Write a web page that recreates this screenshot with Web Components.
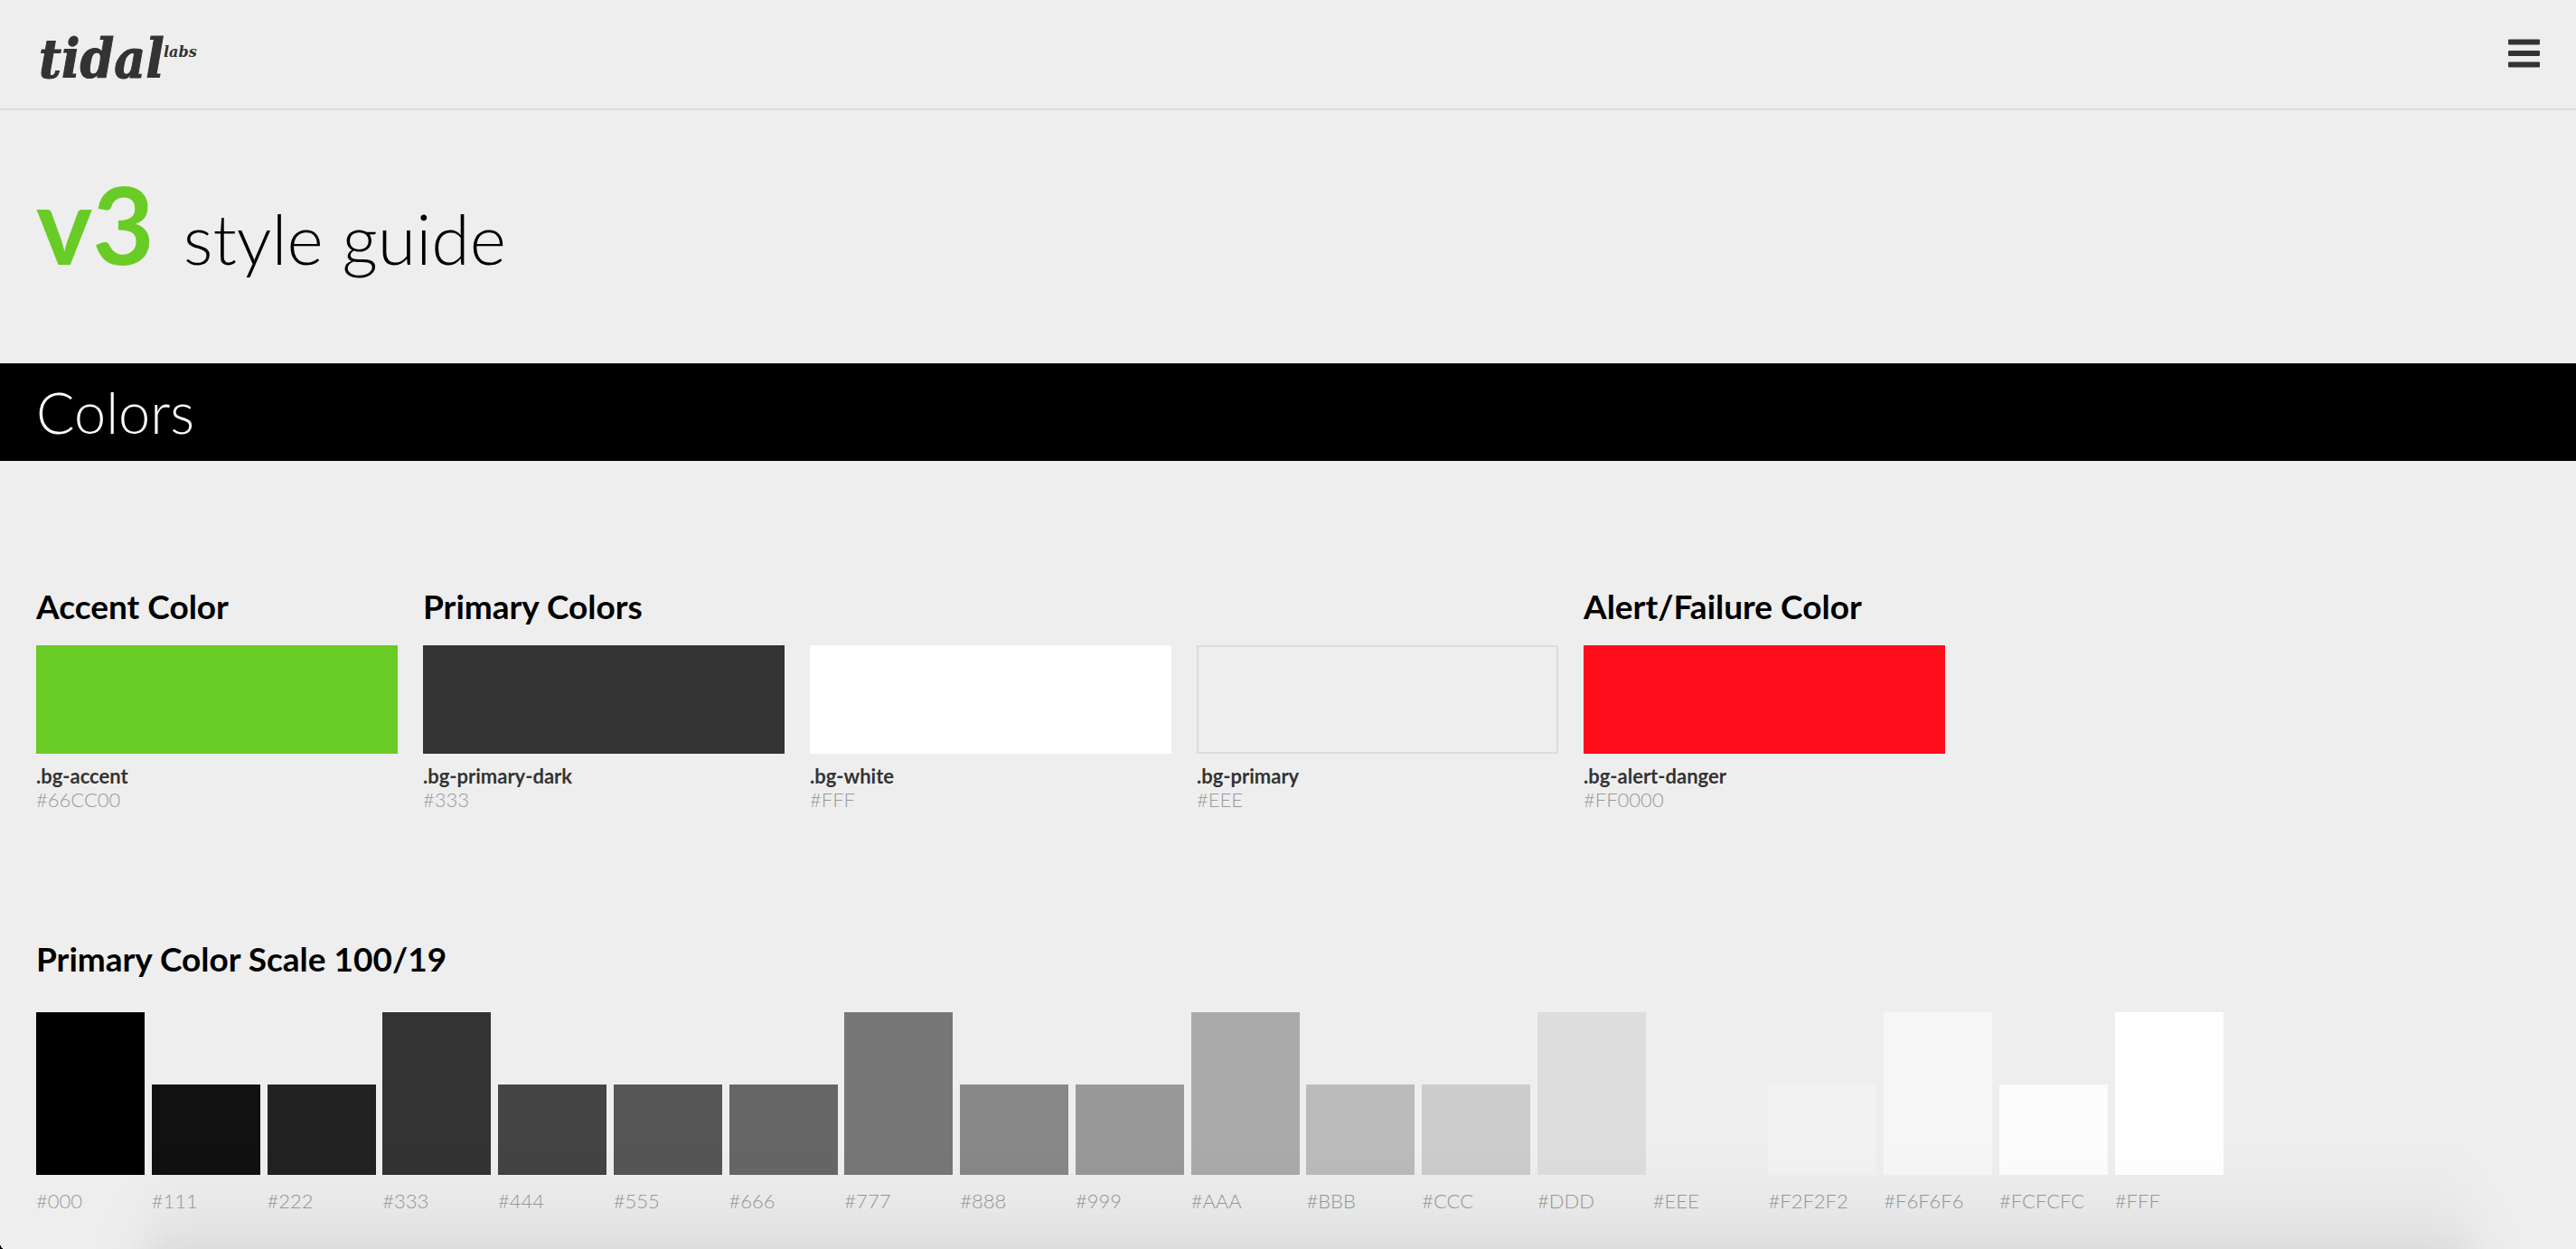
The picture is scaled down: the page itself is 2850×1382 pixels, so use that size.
<!DOCTYPE html>
<html lang="en">
<head>
<meta charset="utf-8">
<title>Tidal Labs – v3 style guide</title>
<style>
  :root {
    --gutter: 40px;
    --accent: #69cc26;
    --dark: #333;
    --rule: #ddd;
    --muted: #999;
  }
  body {
    margin: 0;
    background: #eee;
    color: #000;
    font-family: Lato, "Open Sans", sans-serif;
    font-size: 22px;
    line-height: 26px;
  }
  main { display: flex; flex-direction: column; min-height: calc(100vh - 122px); }
  .palette { display: flex; flex-wrap: wrap; gap: 28px; padding: 140px var(--gutter) 0; }
  .scale { padding: 142px var(--gutter) 26px; }
</style>
</head>
<body>

<site-header></site-header>
<main>
  <page-title version="v3">style guide</page-title>
  <section-band>Colors</section-band>

  <section class="palette">
    <color-group label="Accent Color">
      <color-swatch color="#69cc26" hex="#66CC00">.bg-accent</color-swatch>
    </color-group>
    <color-group label="Primary Colors">
      <color-swatch color="#333" hex="#333">.bg-primary-dark</color-swatch>
      <color-swatch color="#fff" hex="#FFF">.bg-white</color-swatch>
      <color-swatch color="#eee" hex="#EEE" outlined>.bg-primary</color-swatch>
    </color-group>
    <color-group label="Alert/Failure Color">
      <color-swatch color="#ff0d1b" hex="#FF0000">.bg-alert-danger</color-swatch>
    </color-group>
  </section>

  <section class="scale">
    <color-scale label="Primary Color Scale 100/19">
      <scale-step tall>#000</scale-step>
      <scale-step>#111</scale-step>
      <scale-step>#222</scale-step>
      <scale-step tall>#333</scale-step>
      <scale-step>#444</scale-step>
      <scale-step>#555</scale-step>
      <scale-step>#666</scale-step>
      <scale-step tall>#777</scale-step>
      <scale-step>#888</scale-step>
      <scale-step>#999</scale-step>
      <scale-step tall>#AAA</scale-step>
      <scale-step>#BBB</scale-step>
      <scale-step>#CCC</scale-step>
      <scale-step tall>#DDD</scale-step>
      <scale-step>#EEE</scale-step>
      <scale-step>#F2F2F2</scale-step>
      <scale-step tall>#F6F6F6</scale-step>
      <scale-step>#FCFCFC</scale-step>
      <scale-step tall>#FFF</scale-step>
    </color-scale>
  </section>
</main>
<window-shade></window-shade>

<script>
  const define = (name, render) =>
    customElements.define(name, class extends HTMLElement {
      constructor() {
        super();
        this.attachShadow({ mode: 'open' });
      }
      connectedCallback() {
        this.shadowRoot.innerHTML = render(this);
      }
    });

  define('site-header', () => `
    <style>
      :host { display: block; }
      header { display: flex; align-items: center; justify-content: space-between;
        height: 120px; padding: 0 var(--gutter); border-bottom: 2px solid var(--rule); }
      a { display: block; }
      svg { display: block; fill: var(--dark); overflow: visible; }
      .word { font: italic bold 60px "DejaVu Serif Condensed", "DejaVu Serif", serif; stroke: var(--dark); stroke-width: 1px; }
      .labs { font: italic bold 16px "DejaVu Serif", serif; }
      button { padding: 0; border: 0; background: none; cursor: pointer; }
    </style>
    <header>
      <a href="#" aria-label="tidal labs">
        <svg width="190" height="100" viewBox="0 0 190 100">
          <text class="word" x="3" y="76">tidal</text>
          <text class="labs" x="141" y="53">labs</text>
        </svg>
      </a>
      <button type="button" aria-label="Menu">
        <svg width="35" height="34" viewBox="0 0 35 34">
          <rect y="0.5" width="35" height="6" rx="1"/>
          <rect y="13" width="35" height="6" rx="1"/>
          <rect y="25.5" width="35" height="6" rx="1"/>
        </svg>
      </button>
    </header>`);

  define('page-title', el => `
    <style>
      :host { display: block; }
      h1 { display: flex; align-items: baseline; gap: 32px; margin: 0;
        height: 280px; padding: 54px var(--gutter) 0; box-sizing: border-box;
        font-size: 77px; font-weight: 300; line-height: 144px; }
      b { color: var(--accent); font-size: 118px; font-weight: 700; }
    </style>
    <h1><b>${el.getAttribute('version')}</b><span><slot></slot></span></h1>`);

  define('section-band', () => `
    <style>
      :host { display: block; background: #000; color: #fff; }
      h2 { margin: 0; padding: 0 var(--gutter); font-size: 63px; font-weight: 300; line-height: 108px; }
    </style>
    <h2><slot></slot></h2>`);

  define('color-group', el => `
    <style>
      :host { display: block; }
      h3 { margin: 0 0 22px; font-size: 37px; font-weight: 700; line-height: 42px; }
      div { display: flex; flex-wrap: wrap; gap: 28px; }
    </style>
    <h3>${el.getAttribute('label')}</h3>
    <div><slot></slot></div>`);

  define('color-swatch', el => `
    <style>
      :host { display: block; width: 400px; }
      .chip { height: 120px; box-sizing: border-box; margin-bottom: 12px;
        background: ${el.getAttribute('color')};
        ${el.hasAttribute('outlined') ? 'border: 2px solid var(--rule);' : ''} }
      b, span { display: block; }
      b { color: var(--dark); }
      span { color: var(--muted); font-weight: 300; }
    </style>
    <div class="chip"></div>
    <b><slot></slot></b>
    <span>${el.getAttribute('hex')}</span>`);

  define('color-scale', el => `
    <style>
      :host { display: block; }
      h3 { margin: 0 0 38px; font-size: 37px; font-weight: 700; line-height: 42px; }
      div { display: flex; align-items: flex-end; justify-content: space-between; max-width: 2420px; }
    </style>
    <h3>${el.getAttribute('label')}</h3>
    <div><slot></slot></div>`);

  define('scale-step', el => `
    <style>
      :host { display: block; width: 120px; }
      .bar { height: ${el.hasAttribute('tall') ? 180 : 100}px; margin-bottom: 16px; background: ${el.textContent}; }
      span { display: block; color: var(--muted); font-weight: 300; }
    </style>
    <div class="bar"></div>
    <span><slot></slot></span>`);

  /* Soft shade along the lower edge, with the rounded window corner at its left end. */
  define('window-shade', () => `
    <style>
      :host { position: fixed; inset: auto 0 0 0; height: 120px; pointer-events: none; }
      .shade { height: 100%;
        background: linear-gradient(rgba(0,0,0,0), rgba(0,0,0,.006) 30%, rgba(0,0,0,.022) 60%, rgba(0,0,0,.044) 82%, rgba(0,0,0,.072));
        -webkit-mask-image: linear-gradient(90deg, transparent 100px, rgba(0,0,0,.15) 140px, rgba(0,0,0,.85) 185px, #000 225px, #000 calc(100% - 175px), rgba(0,0,0,.85) calc(100% - 140px), rgba(0,0,0,.15) calc(100% - 95px), transparent calc(100% - 55px));
        mask-image: linear-gradient(90deg, transparent 100px, rgba(0,0,0,.15) 140px, rgba(0,0,0,.85) 185px, #000 225px, #000 calc(100% - 175px), rgba(0,0,0,.85) calc(100% - 140px), rgba(0,0,0,.15) calc(100% - 95px), transparent calc(100% - 55px)); }
      .corner { position: absolute; left: 0; bottom: 0; width: 4px; height: 7px;
        background: radial-gradient(ellipse 4px 7px at 100% 0, transparent 95%, #000); }
    </style>
    <div class="shade"></div>
    <div class="corner"></div>`);
</script>
</body>
</html>
